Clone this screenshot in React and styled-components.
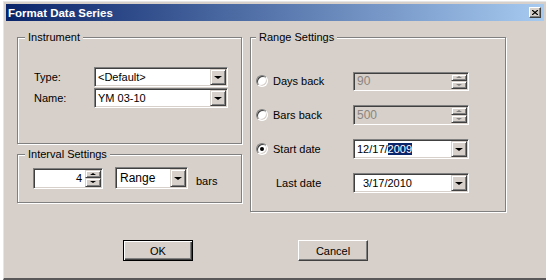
import React from "react";
import styled, { createGlobalStyle, css } from "styled-components";

const face = "#d7d0ca";

const GlobalStyle = createGlobalStyle`
  html, body {
    margin: 0;
    padding: 0;
    background: #fff;
  }
  body {
    font-family: "Liberation Sans", Arial, sans-serif;
    font-size: 11px;
    color: #000;
    overflow: hidden;
  }
`;

const Window = styled.div`
  margin: 1px 0 0 3px;
  width: 543px;
  height: 279px;
  box-sizing: border-box;
  background: ${face};
  border-left: 1px solid #e6e6e6;
  border-top: 1px solid #e6e6e6;
  border-bottom: 2px solid #5a5858;
  padding: 2px 0 0 2px;
  display: flex;
  flex-direction: column;
`;

const TitleBar = styled.div`
  height: 17px;
  margin-right: 2px;
  padding: 0 3px 0 2px;
  display: flex;
  align-items: center;
  justify-content: space-between;
  background: linear-gradient(to right, #0a246a, #a6caf0);
  color: #fff;
  font-weight: bold;
  font-size: 11.5px;
`;

const CloseButton = styled.div`
  width: 12px;
  height: 11px;
  box-sizing: border-box;
  display: flex;
  align-items: center;
  justify-content: center;
  background: ${face};
  border: 1px solid;
  border-color: #fff #404040 #404040 #fff;
  box-shadow: inset -1px -1px #808080;
`;

const Body = styled.div`
  padding: 16px 0 0 11px;
`;

const Columns = styled.div`
  display: grid;
  grid-template-columns: 225px 256px;
  column-gap: 8px;
  align-items: start;
`;

const Column = styled.div`
  display: flex;
  flex-direction: column;
  gap: 10px;
`;

const Group = styled.div`
  height: ${(p) => p.$height}px;
  box-sizing: border-box;
  border: 1px solid #808080;
  box-shadow: inset 1px 1px #fff, 1px 1px #fff;
  display: flex;
  flex-direction: column;
`;

const Legend = styled.div`
  align-self: flex-start;
  margin: -7px 0 0 ${(p) => p.$indent ?? 7}px;
  padding: 0 3px;
  line-height: 13px;
  background: ${face};
`;

const FormGrid = styled.div`
  margin-top: 23px;
  padding-left: 16px;
  display: grid;
  grid-template-columns: 60px 134px;
  grid-auto-rows: 20px;
  row-gap: 1px;
  align-items: center;
`;

const IntervalRow = styled.div`
  margin-top: 6px;
  padding-left: 15px;
  display: flex;
  align-items: center;
  gap: 12px;
`;

const RangeGrid = styled.div`
  margin-top: 27px;
  padding-left: 5px;
  display: grid;
  grid-template-columns: 97px 116px;
  grid-auto-rows: 20px;
  row-gap: 14px;
  align-items: center;
`;

const Choice = styled.div`
  display: flex;
  align-items: center;
  gap: 5px;
  padding-left: ${(p) => p.$indent || 0}px;
`;

const Radio = styled.span`
  width: 12px;
  height: 12px;
  box-sizing: border-box;
  border-radius: 50%;
  border: 1px solid;
  border-color: #808080 #fff #fff #808080;
  box-shadow: inset 1px 1px #404040, inset -1px -1px ${face};
  background: #fff;
  display: flex;
  align-items: center;
  justify-content: center;
  &::after {
    content: "";
    width: 4px;
    height: 4px;
    border-radius: 50%;
    background: ${(p) => (p.$checked ? "#000" : "transparent")};
  }
`;

const Field = styled.div`
  width: ${(p) => (p.$width ? `${p.$width}px` : "auto")};
  height: ${(p) => p.$height || 20}px;
  box-sizing: border-box;
  padding: 1px;
  display: flex;
  align-items: stretch;
  background: ${(p) => (p.$disabled ? face : "#fff")};
  border: 1px solid;
  border-color: #808080 #fff #fff #808080;
  box-shadow: inset 1px 1px #404040, inset -1px -1px ${face};
`;

const FieldText = styled.div`
  flex: 1;
  display: flex;
  align-items: center;
  justify-content: ${(p) => (p.$right ? "flex-end" : "flex-start")};
  padding: 0 ${(p) => (p.$right ? 3 : 0)}px 0 ${(p) => p.$pad ?? 2}px;
  overflow: hidden;
  white-space: nowrap;
  color: ${(p) => (p.$disabled ? "#8a8580" : "#000")};
  font-size: ${(p) => p.$size || 11}px;
`;

const Selected = styled.span`
  background: #0a246a;
  color: #fff;
`;

const raised = css`
  background: ${face};
  box-sizing: border-box;
  border: 1px solid;
  border-color: ${face} #404040 #404040 ${face};
  box-shadow: inset 1px 1px #fff, inset -1px -1px #808080;
`;

const DropButton = styled.div`
  ${raised}
  width: 16px;
  display: flex;
  align-items: center;
  justify-content: center;
`;

const SpinButtons = styled.div`
  width: 16px;
  display: flex;
  flex-direction: column;
`;

const SpinHalf = styled.div`
  ${raised}
  flex: 1;
  display: flex;
  align-items: center;
  justify-content: center;
`;

const Arrow = styled.span`
  width: 0;
  height: 0;
  border-left: ${(p) => p.$size}px solid transparent;
  border-right: ${(p) => p.$size}px solid transparent;
  ${(p) =>
    p.$up
      ? css`border-bottom: ${p.$size - 1}px solid ${p.$color || "#000"};`
      : css`border-top: ${p.$size - 1}px solid ${p.$color || "#000"};`}
`;

const BarsLabel = styled.span`
  margin-left: -4px;
  padding-top: 5px;
`;

const ButtonRow = styled.div`
  margin-top: 28px;
  padding-left: 106px;
  display: flex;
  gap: 105px;
`;

const Button = styled.button`
  width: 70px;
  height: 21px;
  padding: 0;
  font-family: inherit;
  font-size: 11px;
  color: #000;
  background: ${face};
  box-sizing: border-box;
  border: 1px solid;
  ${(p) =>
    p.$default
      ? css`
          border-color: #000;
          box-shadow: inset 1px 1px #fff, inset -1px -1px #404040,
            inset -2px -2px #808080;
        `
      : css`
          border-color: #fff #404040 #404040 #fff;
          box-shadow: inset -1px -1px #808080;
        `}
`;

const Combo = ({ children, width, height, disabled, pad, size }) => (
  <Field $width={width} $height={height} $disabled={disabled}>
    <FieldText $pad={pad} $size={size}>
      {children}
    </FieldText>
    <DropButton>
      <Arrow $size={4} />
    </DropButton>
  </Field>
);

const Spin = ({ children, width, height, disabled, right }) => (
  <Field $width={width} $height={height} $disabled={disabled}>
    <FieldText $right={right} $disabled={disabled} $size={disabled ? 12 : 11}>
      {children}
    </FieldText>
    <SpinButtons>
      <SpinHalf>
        <Arrow $up $size={3} $color={disabled ? "#808080" : "#000"} />
      </SpinHalf>
      <SpinHalf>
        <Arrow $size={3} $color={disabled ? "#808080" : "#000"} />
      </SpinHalf>
    </SpinButtons>
  </Field>
);

export default function App() {
  return (
    <>
      <GlobalStyle />
      <Window>
        <TitleBar>
          <span>Format Data Series</span>
          <CloseButton>
            <svg width="6" height="5" viewBox="0 0 6 5">
              <path d="M0 0 L6 5 M6 0 L0 5" stroke="#000" strokeWidth="1.2" />
            </svg>
          </CloseButton>
        </TitleBar>
        <Body>
          <Columns>
            <Column>
              <Group $height={107}>
                <Legend>Instrument</Legend>
                <FormGrid>
                  <span>Type:</span>
                  <Combo>&lt;Default&gt;</Combo>
                  <span>Name:</span>
                  <Combo>YM 03-10</Combo>
                </FormGrid>
              </Group>
              <Group $height={49}>
                <Legend>Interval Settings</Legend>
                <IntervalRow>
                  <Spin width={70} height={21} right>
                    4
                  </Spin>
                  <Combo width={73} height={22} pad={3} size={12}>
                    Range
                  </Combo>
                  <BarsLabel>bars</BarsLabel>
                </IntervalRow>
              </Group>
            </Column>
            <Group $height={175}>
              <Legend $indent={5}>Range Settings</Legend>
              <RangeGrid>
                <Choice>
                  <Radio />
                  <span>Days back</span>
                </Choice>
                <Spin disabled height={19}>
                  90
                </Spin>
                <Choice>
                  <Radio />
                  <span>Bars back</span>
                </Choice>
                <Spin disabled>500</Spin>
                <Choice>
                  <Radio $checked />
                  <span>Start date</span>
                </Choice>
                <Combo pad={2}>
                  12/17/<Selected>2009</Selected>
                </Combo>
                <Choice $indent={20}>
                  <span>Last date</span>
                </Choice>
                <Combo pad={8}>3/17/2010</Combo>
              </RangeGrid>
            </Group>
          </Columns>
          <ButtonRow>
            <Button $default>OK</Button>
            <Button>Cancel</Button>
          </ButtonRow>
        </Body>
      </Window>
    </>
  );
}
